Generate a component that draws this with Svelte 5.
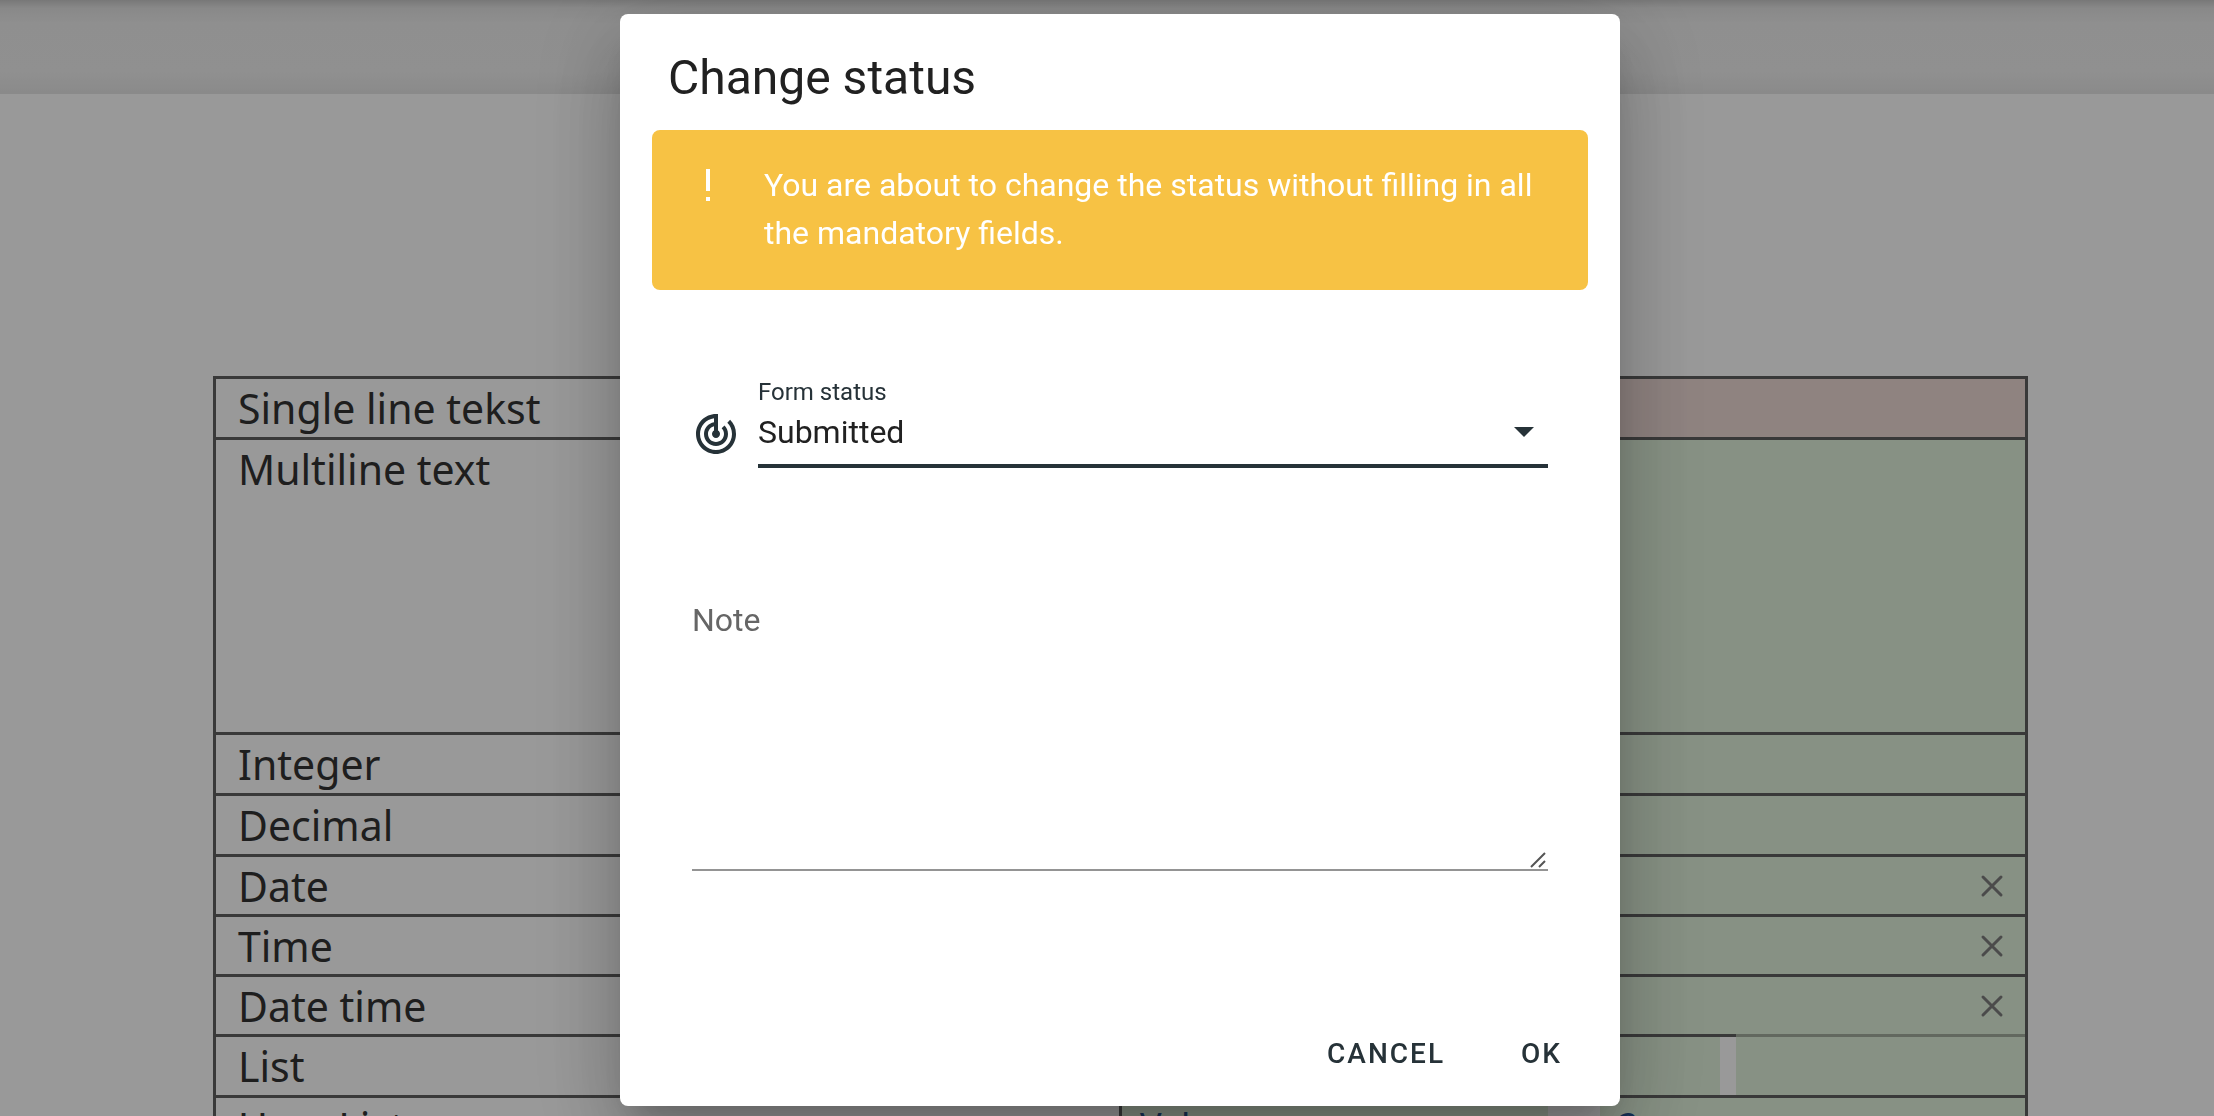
<script>
  const rows = [
    { label: 'Single line tekst', kind: 'required' },
    { label: 'Multiline text', kind: 'tall' },
    { label: 'Integer', kind: 'plain' },
    { label: 'Decimal', kind: 'plain' },
    { label: 'Date', kind: 'clearable' },
    { label: 'Time', kind: 'clearable' },
    { label: 'Date time', kind: 'clearable' },
    { label: 'List', kind: 'split' },
    { label: 'User List', kind: 'values' }
  ];
  let status = $state('Submitted');
  let note = $state('');
</script>

<div class="page">
  <header class="toolbar"></header>
  <main class="sheet">
    <table class="form">
      <tbody>
        {#each rows as row}
          <tr class={row.kind}>
            <th scope="row">{row.label}</th>
            <td>
              {#if row.kind === 'clearable'}
                <button class="clear" aria-label="Clear {row.label}">
                  <svg viewBox="0 0 28 28" width="28" height="28"><path d="M5 5 23 23M23 5 5 23" fill="none" stroke="currentColor" stroke-width="3" stroke-linecap="round" /></svg>
                </button>
              {:else if row.kind === 'split'}
                <div class="parts"><span></span><span></span></div>
              {:else if row.kind === 'values'}
                <div class="parts wide"><span>Value</span><span>2</span></div>
              {/if}
            </td>
          </tr>
        {/each}
      </tbody>
    </table>
  </main>
</div>

<div class="scrim">
  <div class="dialog" role="dialog" aria-modal="true" aria-labelledby="dialog-title">
    <h2 id="dialog-title">Change status</h2>
    <div class="alert" role="alert">
      <svg class="bang" viewBox="0 0 48 48" width="48" height="48"><path d="M22 8h4v22h-4zM22 36h4v4h-4z" fill="currentColor" /></svg>
      <p>You are about to change the status without filling in all the mandatory fields.</p>
    </div>
    <div class="field">
      <svg class="target" viewBox="0 0 24 24" width="48" height="48"><path fill="currentColor" d="M19.07 4.93l-1.41 1.41C19.1 7.79 20 9.79 20 12c0 4.42-3.58 8-8 8s-8-3.58-8-8c0-4.08 3.05-7.44 7-7.93v2.02C8.16 6.57 6 9.03 6 12c0 3.31 2.69 6 6 6s6-2.69 6-6c0-1.66-.67-3.16-1.76-4.24l-1.41 1.41C15.55 9.9 16 10.9 16 12c0 2.21-1.79 4-4 4s-4-1.79-4-4c0-1.86 1.28-3.41 3-3.86v2.14c-.6.35-1 .98-1 1.72 0 1.1.9 2 2 2s2-.9 2-2c0-.74-.4-1.38-1-1.72V2h-1C6.48 2 2 6.48 2 12s4.48 10 10 10 10-4.48 10-10c0-2.76-1.12-5.26-2.93-7.07z" /></svg>
      <div class="select">
        <label for="status">Form status</label>
        <div class="control">
          <select id="status" bind:value={status}>
            <option>Submitted</option>
          </select>
          <svg class="arrow" viewBox="0 0 20 10" width="20" height="10"><path d="M0 0h20L10 10z" fill="currentColor" /></svg>
        </div>
      </div>
    </div>
    <div class="note">
      <label for="note">Note</label>
      <textarea id="note" bind:value={note}></textarea>
      <svg class="grip" viewBox="0 0 16 16" width="16" height="16"><path d="M1 15 15 1M9 15l6-6" fill="none" stroke="#555" stroke-width="2" /></svg>
    </div>
    <div class="actions">
      <button>CANCEL</button>
      <button>OK</button>
    </div>
  </div>
</div>

<style>
  :global(body) {
    background: #fff;
    overflow: hidden;
    font-family: Roboto, 'Liberation Sans', sans-serif;
  }
  .page {
    height: 100vh;
    overflow: hidden;
  }
  .toolbar {
    height: 94px;
    box-sizing: border-box;
    background: linear-gradient(#c8c8c8, #e4e4e4 8px, #efefef 24px, #f0f0f0 72px, #e6e6e6);
  }
  .sheet {
    padding: 282px 186px 0 213px;
  }
  .form {
    width: 100%;
    table-layout: fixed;
    border-collapse: collapse;
    color: #333;
    font-family: 'Noto Sans', sans-serif;
    font-size: 41px;
    line-height: 48px;
  }
  .form th,
  .form td {
    border: 3px solid #606060;
    height: 58px;
    padding: 0;
    box-sizing: content-box;
    vertical-align: top;
  }
  .form th {
    padding: 5px 0 0 22px;
    height: 53px;
    font-weight: 400;
    text-align: left;
  }
  .form tr.tall th {
    height: 287px;
  }
  .form td {
    background: #e1f2dc;
  }
  .form .required td {
    background: #eedad6;
  }
  .form .clearable th {
    height: 52px;
  }
  .form .clearable td {
    height: 57px;
    padding-right: 19px;
    vertical-align: middle;
  }
  .clear {
    display: block;
    margin-left: auto;
    padding: 0;
    border: 0;
    background: none;
    color: #7d7d7d;
  }
  .clear svg {
    display: block;
  }
  .form .split td,
  .form .values td {
    background: #fff;
  }
  .parts {
    display: grid;
    grid-template-columns: 598px 1fr;
    gap: 16px;
    height: 58px;
  }
  .parts span {
    background: #e1f2dc;
  }
  .parts:not(.wide) span:last-child {
    margin-top: -3px;
    border-top: 3px solid #a3ae9f;
  }
  .parts.wide {
    grid-template-columns: 426px 1fr;
    gap: 52px;
    color: #24508f;
    font-size: 36px;
  }
  .parts.wide span {
    padding: 4px 18px;
  }
  .scrim {
    position: fixed;
    inset: 0;
    box-sizing: border-box;
    padding: 14px 0 10px 26px;
    display: flex;
    justify-content: center;
    align-items: flex-start;
    background: rgba(0, 0, 0, 0.4);
  }
  .dialog {
    width: 100%;
    max-width: 1000px;
    box-sizing: border-box;
    padding: 32px 32px 16px;
    border-radius: 8px;
    background: #fff;
    color: #212121;
    box-shadow:
      0 22px 30px -14px rgba(0, 0, 0, 0.2),
      0 48px 76px 6px rgba(0, 0, 0, 0.14),
      0 18px 92px 16px rgba(0, 0, 0, 0.12);
  }
  h2 {
    margin: 0 16px 20px;
    font-size: 48px;
    font-weight: 400;
    line-height: 64px;
  }
  .alert {
    display: flex;
    gap: 32px;
    padding: 31px 32px 33px;
    border-radius: 8px;
    background: #f7c244;
    color: #fff;
    font-size: 32px;
    line-height: 48px;
  }
  .alert p {
    margin: 0;
  }
  .bang {
    flex: none;
  }
  .field {
    display: flex;
    gap: 18px;
    margin: 86px 40px 0;
    color: #263238;
  }
  .target {
    flex: none;
    margin-top: 34px;
  }
  .select {
    flex: 1;
    border-bottom: 4px solid #263238;
  }
  .select label {
    display: block;
    font-size: 24px;
    line-height: 32px;
  }
  .control {
    display: grid;
    align-items: center;
    padding-bottom: 8px;
  }
  .control > * {
    grid-area: 1 / 1;
  }
  .arrow {
    justify-self: end;
    margin-right: 14px;
    pointer-events: none;
  }
  select {
    appearance: none;
    width: 100%;
    height: 48px;
    margin: 0;
    padding: 0;
    border: 0;
    outline: 0;
    background: none;
    color: #212121;
    font: 32px/48px Roboto, sans-serif;
  }
  .note {
    display: grid;
    margin: 128px 40px 0;
  }
  .note label {
    grid-area: 1 / 1;
    color: #666;
    font-size: 32px;
    line-height: 48px;
  }
  .note textarea {
    grid-area: 2 / 1;
    height: 227px;
    box-sizing: border-box;
    padding: 0;
    border: 0;
    border-bottom: 2px solid #949494;
    border-radius: 0;
    outline: 0;
    background: none;
    resize: none;
    font: 32px/48px Roboto, sans-serif;
  }
  .grip {
    grid-area: 2 / 1;
    place-self: end;
    margin: 0 2px 3px 0;
    pointer-events: none;
  }
  .actions {
    display: flex;
    justify-content: flex-end;
    gap: 24px;
    margin-top: 147px;
  }
  .actions button {
    height: 72px;
    padding: 0 26px;
    border: 0;
    background: none;
    color: #263238;
    font: 500 28px/72px Roboto, sans-serif;
    letter-spacing: 2px;
  }
</style>
